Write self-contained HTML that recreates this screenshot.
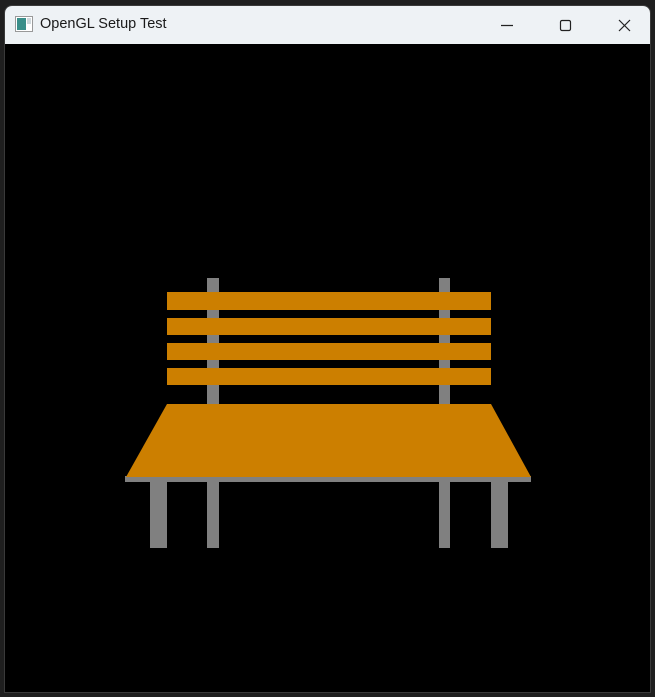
<!DOCTYPE html>
<html><head><style>
html,body{margin:0;padding:0;width:655px;height:697px;background:#1f1f1f;overflow:hidden}
.win{position:absolute;left:4px;top:5px;width:647px;height:688px;background:#000;border-radius:8px 8px 0 0;overflow:hidden;border:1px solid #3a3a3a;box-sizing:border-box}
.tb{position:absolute;left:0;top:0;width:100%;height:38px;background:#eef2f5;font-family:"Liberation Sans",sans-serif;font-size:14.5px;color:#1a1a1a}
.tb .t{position:absolute;left:35px;top:10px}
</style></head><body>
<div class="win">
<div class="tb">
<svg style="position:absolute;left:10px;top:10px" width="18" height="16"><rect x="0.5" y="0.5" width="17" height="15" fill="#fff" stroke="#999"/><rect x="2" y="2" width="9" height="12" fill="#3a8f8a"/><rect x="12" y="2" width="4" height="6" fill="#cfd8dc"/></svg>
<span class="t">OpenGL Setup Test</span>
<svg style="position:absolute;left:490px;top:12px" width="140" height="16">
<line x1="6" y1="7.5" x2="18" y2="7.5" stroke="#222" stroke-width="1.2"/>
<rect x="65.5" y="2.5" width="10" height="10" rx="1.5" fill="none" stroke="#222" stroke-width="1.2"/>
<line x1="124" y1="2" x2="135" y2="13" stroke="#222" stroke-width="1.2"/><line x1="135" y1="2" x2="124" y2="13" stroke="#222" stroke-width="1.2"/>
</svg>
</div>
</div>
<svg style="position:absolute;left:0;top:0" width="655" height="697">
<g fill="#808080">
<rect x="207" y="278" width="12" height="270"/><rect x="439" y="278" width="11" height="270"/>
<rect x="150" y="480" width="17" height="68"/><rect x="491" y="480" width="17" height="68"/>
<rect x="125" y="476" width="406" height="6"/>
</g>
<g fill="#cc7f00">
<rect x="167" y="292" width="324" height="18"/><rect x="167" y="318" width="324" height="17"/>
<rect x="167" y="343" width="324" height="17"/><rect x="167" y="368" width="324" height="17"/>
<polygon points="167,404 491,404 531,477 126,477"/>
</g>
</svg>
</body></html>
